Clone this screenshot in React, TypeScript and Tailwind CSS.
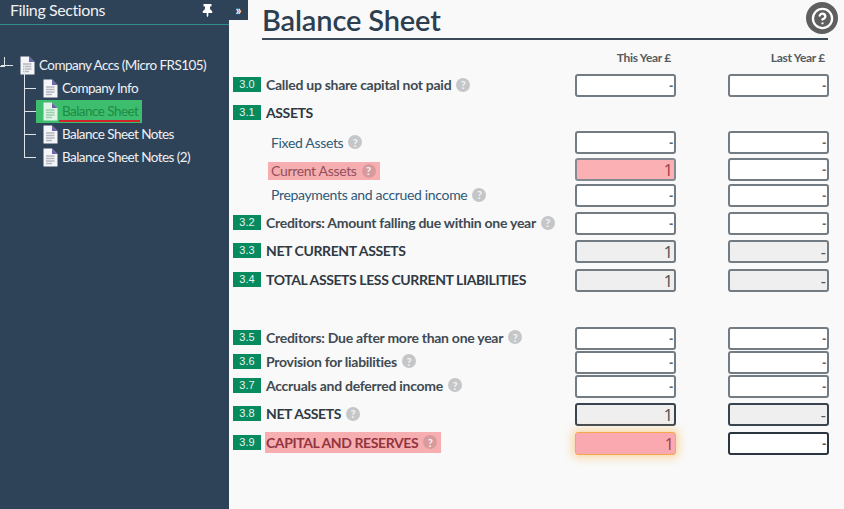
import { FaThumbtack } from "react-icons/fa";
import { CircleHelp } from "lucide-react";

function Doc({ dim }: { dim?: boolean }) {
  return (
    <svg width="15" height="19" viewBox="0 0 15 19" className="shrink-0">
      <path d="M0.5 0.5H9L14.5 6V18.5H0.5Z" fill={dim ? "#dff3e6" : "#f4f5f8"} />
      <path d="M9 0.5L14.5 6H9Z" fill="#6a64a8" />
      <path d="M3 8H11.5M3 10.5H11.5M3 13H11.5M3 15.5H9" stroke={dim ? "#9ccfb0" : "#b4b6bc"} strokeWidth="1.3" />
    </svg>
  );
}

function Help({ red }: { red?: boolean }) {
  return (
    <span
      className={`ml-[5px] inline-flex h-[14px] w-[14px] shrink-0 items-center justify-center rounded-full text-[11px] leading-none font-bold tracking-normal text-[#f4f4f4] ${
        red ? "bg-[#d99a9e]" : "bg-[#c4c6c8]"
      }`}
    >
      ?
    </span>
  );
}

type RowT = {
  mt: string;
  badge?: string;
  label: string;
  kind: "main" | "sub" | "caps";
  flag?: boolean;
  noHelp?: boolean;
  a?: string;
  b?: string;
  lift?: string;
};

const rows: RowT[] = [
  { mt: "mt-[7px]", badge: "3.0", label: "Called up share capital not paid", kind: "main", a: "in", b: "in", lift: "mb-[2px]" },
  { mt: "mt-[5px]", badge: "3.1", label: "ASSETS", kind: "caps", noHelp: true, lift: "mb-[2px]" },
  { mt: "mt-[6px]", label: "Fixed Assets", kind: "sub", a: "in", b: "in", lift: "mb-[1px]" },
  { mt: "mt-[4px]", label: "Current Assets", kind: "sub", flag: true, a: "err", b: "in", lift: "mt-[2px]" },
  { mt: "mt-[3px]", label: "Prepayments and accrued income", kind: "sub", a: "in", b: "in", lift: "mb-[2px]" },
  { mt: "mt-[5px]", badge: "3.2", label: "Creditors: Amount falling due within one year", kind: "main", a: "in", b: "in", lift: "mb-[2px]" },
  { mt: "mt-[5px]", badge: "3.3", label: "NET CURRENT ASSETS", kind: "caps", noHelp: true, a: "calc", b: "calc", lift: "mb-[2px]" },
  { mt: "mt-[6px]", badge: "3.4", label: "TOTAL ASSETS LESS CURRENT LIABILITIES", kind: "caps", noHelp: true, a: "calc", b: "calc", lift: "mb-[2px]" },
  { mt: "mt-[35px]", badge: "3.5", label: "Creditors: Due after more than one year", kind: "main", a: "in", b: "in", lift: "mb-[3px]" },
  { mt: "mt-[1px]", badge: "3.6", label: "Provision for liabilities", kind: "main", a: "in", b: "in", lift: "mb-[3px]" },
  { mt: "mt-[1px]", badge: "3.7", label: "Accruals and deferred income", kind: "main", a: "in", b: "in", lift: "mb-[3px]" },
  { mt: "mt-[5px]", badge: "3.8", label: "NET ASSETS", kind: "caps", a: "total", b: "total", lift: "mb-[2px]" },
  { mt: "mt-[6px]", badge: "3.9", label: "CAPITAL AND RESERVES", kind: "caps", flag: true, a: "glow", b: "dark", lift: "mb-[3px]" },
];

function Cell({ t, v }: { t?: string; v: string }) {
  if (!t) return <div className="w-[101px] shrink-0" />;
  const base = "flex h-[23px] w-[101px] shrink-0 items-center justify-end rounded-[3px] pr-[1px] font-['Noto_Sans',sans-serif] leading-none";
  const styles: Record<string, string> = {
    in: "border-2 border-[#737b83] bg-white text-[12px] font-bold text-[#5c6670]",
    err: "border-2 border-[#858a90] bg-[#fbb0b3] text-[16px] text-[#a5424a]",
    calc: "border-2 border-[#737b83] bg-[#efefef] text-[16px] text-[#555555]",
    total: "border-2 border-[#3a444e] bg-[#efefef] text-[16px] text-[#555555]",
    dark: "border-2 border-[#2a3540] bg-white text-[12px] font-bold text-[#4a5058]",
    glow: "border border-[#f5a94e] bg-[#fba9b0] text-[16px] text-[#a5424a] shadow-[0_0_8px_3px_rgba(250,190,100,0.55)] ml-[2px] w-[99px]",
  };
  return <div className={`${base} ${styles[t]}`}>{v}</div>;
}

function Row({ r }: { r: RowT }) {
  const a = r.a === "err" || r.a === "glow" || r.a === "calc" || r.a === "total" ? "1" : "-";
  const txt =
    r.kind === "sub"
      ? "text-[14px] tracking-[-0.33px] font-normal text-[#2f5a78]"
      : r.kind === "caps"
        ? "text-[14px] tracking-[-0.4px] font-bold text-[#2f3a44]"
        : "text-[14px] tracking-[-0.27px] font-bold text-[#3f4a52]";
  return (
    <div className={`flex h-[23px] items-center ${r.mt}`}>
      {r.badge ? (
        <span className="mb-[3px] flex h-[15px] w-[28px] shrink-0 items-center justify-center bg-[#068a5e] font-['Liberation_Sans',sans-serif] text-[11px] leading-none text-[#e6f3ee]">
          {r.badge}
        </span>
      ) : (
        <span className="w-[35px] shrink-0" />
      )}
      <div className={`flex min-w-0 flex-1 ${r.badge ? "ml-[4px]" : ""} ${r.lift ?? ""}`}>
        <span
          className={`flex items-center ${txt} ${
            r.flag
              ? r.badge
                ? "h-[21px] bg-[#f6aeb0] pr-[4px] pl-[1px] text-[#93353f]"
                : "h-[18px] bg-[#f6aeb0] pr-[4px] pl-[3px] text-[#93505c]"
              : r.kind === "sub"
                ? "pl-[3px]"
                : "pl-[1px]"
          }`}
        >
          {r.label}
          {!r.noHelp && <Help red={r.flag} />}
        </span>
      </div>
      <Cell t={r.a} v={a} />
      <div className="w-[52px] shrink-0" />
      <Cell t={r.b} v="-" />
    </div>
  );
}

function TreeRow({ label, active, last }: { label: string; active?: boolean; last?: boolean }) {
  return (
    <div className="relative flex h-[23px] items-center pl-[19px]">
      <span className={`absolute top-[-12px] left-0 w-[1px] bg-[#dfe4e8] ${last ? "h-[23px]" : "h-[35px]"}`} />
      <span className="absolute top-[11px] left-0 h-[1px] w-[12px] bg-[#dfe4e8]" />
      {active ? (
        <span className="-ml-[7px] flex h-[23px] items-center gap-[4px] bg-[#3dbe6e] pr-[4px] pl-[7px]">
          <Doc dim />
          <span className="relative text-[13.5px] leading-none tracking-[-0.55px] text-[#1d8a45]">
            {label}
            <span className="absolute right-[-2px] bottom-[-4px] left-[-3px] h-[2px] bg-[#d2232a]" />
          </span>
        </span>
      ) : (
        <span className="flex items-center gap-[4px]">
          <Doc />
          <span className="text-[13.5px] leading-none tracking-[-0.55px] text-[#eef1f4]">{label}</span>
        </span>
      )}
    </div>
  );
}

export default function App() {
  return (
    <div className="flex h-[509px] w-[844px] overflow-hidden bg-[#f9f9f9] font-['Lato',sans-serif]">
      <aside className="w-[229px] shrink-0 bg-[#2f4358]">
        <header className="flex h-[25px] items-center justify-between border-b border-[#2f8f86] pr-[15px] pb-[4px] pl-[10px]">
          <span className="text-[16px] leading-none tracking-[-0.4px] text-[#eef1f4]">Filing Sections</span>
          <FaThumbtack className="text-[13px] text-white" />
        </header>
        <div className="relative mt-[31px] pl-[20px]">
          <span className="absolute top-[1px] left-0 h-[10px] w-[5px] border-r border-b border-[#dfe4e8]" />
          <span className="absolute top-[9px] left-[1px] h-[1px] w-[12px] bg-[#dfe4e8]" />
          <div className="flex h-[19px] items-center gap-[4px]">
            <Doc />
            <span className="text-[13.5px] leading-none tracking-[-0.55px] text-[#eef1f4]">Company Accs (Micro FRS105)</span>
          </div>
          <div className="mt-[2px] ml-[4px]">
            <TreeRow label="Company Info" />
            <TreeRow label="Balance Sheet" active />
            <TreeRow label="Balance Sheet Notes" />
            <TreeRow label="Balance Sheet Notes (2)" last />
          </div>
        </div>
      </aside>
      <main className="relative min-w-0 flex-1 pr-[15px] pl-[4px]">
        <button className="absolute top-0 left-0 flex h-[20px] w-[19px] items-center justify-center bg-[#2f4358] text-[13px] leading-none font-bold text-white">
          »
        </button>
        <div className="absolute top-[2px] right-[6px] flex h-[32px] w-[32px] items-center justify-center rounded-full bg-[#5f5f5f]">
          <CircleHelp size={23} strokeWidth={2.4} className="text-white" />
        </div>
        <h1 className="mr-[1px] ml-[29px] h-[40px] border-b-2 border-[#3c4a5a] pt-[3px] text-[29px] leading-[34px] font-semibold tracking-[-0.15px] text-[#2c3e50]">
          Balance Sheet
        </h1>
        <div className="mt-[9px] flex h-[18px] items-center text-[12px] leading-none font-bold tracking-[-0.3px] text-[#555b60]">
          <span className="flex-1" />
          <span className="w-[101px] pr-[5px] text-right">This Year £</span>
          <span className="w-[52px]" />
          <span className="w-[101px] pr-[4px] text-right">Last Year £</span>
        </div>
        {rows.map((r, i) => (
          <Row key={i} r={r} />
        ))}
      </main>
    </div>
  );
}
